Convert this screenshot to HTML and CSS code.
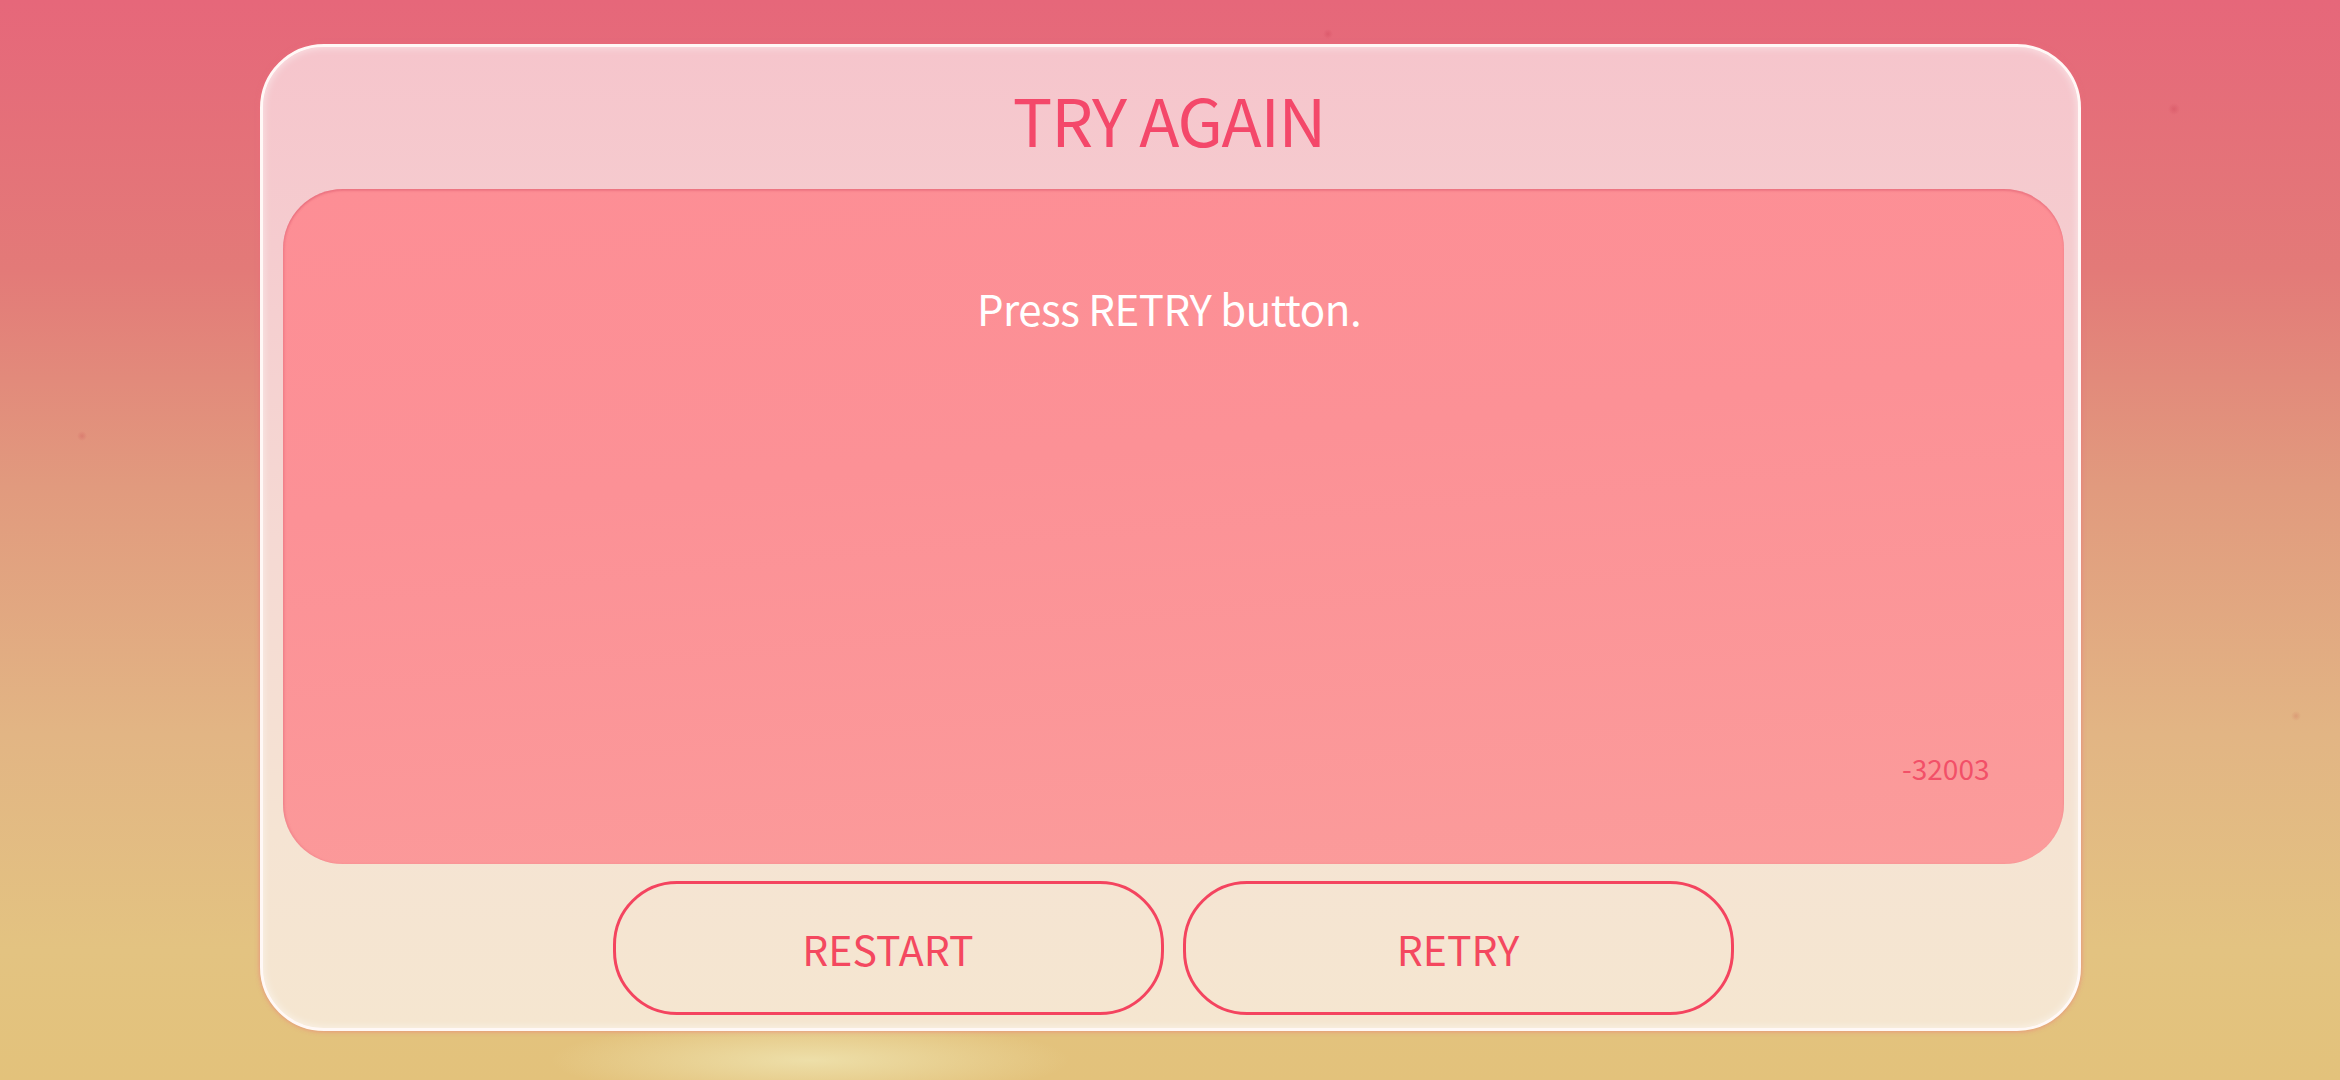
FILE: index.html
```html
<!DOCTYPE html>
<html lang="en">
<head>
<meta charset="utf-8">
<title>TRY AGAIN</title>
<link rel="stylesheet" href="styles.css">
</head>
<body>
<div class="stage">
  <section class="dialog">
    <h1 class="dialog-title">TRY AGAIN</h1>
    <div class="message-panel">
      <p class="message-text">Press RETRY button.</p>
      <span class="error-code">-32003</span>
    </div>
    <div class="actions">
      <button class="action-btn" type="button">RESTART</button>
      <button class="action-btn" type="button">RETRY</button>
    </div>
  </section>
</div>
</body>
</html>
```

FILE: styles.css
```css
html, body {
  margin: 0;
  padding: 0;
  width: 2340px;
  height: 1080px;
  overflow: hidden;
}

body {
  font-family: "Noto Sans CJK JP", "Noto Sans", sans-serif;
  background:
    radial-gradient(circle 5px at 1328px 34px, rgba(200, 60, 80, 0.3), rgba(200, 60, 80, 0) 100%),
    radial-gradient(circle 6px at 2174px 109px, rgba(200, 60, 80, 0.3), rgba(200, 60, 80, 0) 100%),
    radial-gradient(circle 5px at 82px 436px, rgba(200, 70, 80, 0.28), rgba(200, 70, 80, 0) 100%),
    radial-gradient(circle 5px at 2296px 716px, rgba(200, 90, 80, 0.25), rgba(200, 90, 80, 0) 100%),
    radial-gradient(ellipse 260px 40px at 810px 1060px, rgba(240, 230, 180, 0.8), rgba(240, 230, 180, 0) 100%),
    linear-gradient(180deg, #e6677a 0%, #e37a78 25%, #e19a7e 45%, #e2b584 68%, #e3c381 88%, #e3c27b 100%);
}

.stage {
  display: flex;
  justify-content: center;
  padding-top: 44px;
}

.dialog {
  box-sizing: border-box;
  width: 1821px;
  height: 987px;
  border: 3px solid #fff8f6;
  border-radius: 64px;
  background: linear-gradient(180deg, #f6c5cc 0%, #f5cccf 20%, #f5d9d3 50%, #f5e4d3 80%, #f5e6d0 100%);
  box-shadow: 0 0 5px rgba(236, 110, 125, 0.7), inset 0 0 8px rgba(255, 255, 255, 0.6);
  padding: 0 14px 0 20px;
  display: flex;
  flex-direction: column;
}

.dialog-title {
  margin: 0;
  height: 142px;
  display: flex;
  align-items: center;
  justify-content: center;
  font-size: 66px;
  font-weight: 400;
  color: #f4486a;
  letter-spacing: -1.2px;
  padding-right: 8px;
}

.message-panel {
  position: relative;
  height: 675px;
  border-radius: 60px;
  background: linear-gradient(175deg, #fd8e95 0%, #fc9196 40%, #fb9c9b 100%);
  box-shadow: inset 0 2px 2px rgba(220, 90, 110, 0.45), inset 2px 0 2px rgba(220, 90, 110, 0.2);
  display: flex;
  flex-direction: column;
  align-items: center;
}

.message-text {
  margin: 98px 0 0 0;
  font-size: 42px;
  color: #ffffff;
  line-height: 1;
  letter-spacing: -0.5px;
  padding-right: 8px;
}

.error-code {
  position: absolute;
  right: 74px;
  top: 565px;
  font-size: 28px;
  color: #f25068;
  line-height: 1;
}

.actions {
  display: flex;
  justify-content: center;
  gap: 19px;
  margin-top: 17px;
}

.action-btn {
  box-sizing: border-box;
  width: 551px;
  height: 134px;
  border: 3px solid #f4445f;
  border-radius: 64px;
  background: transparent;
  font-family: "Noto Sans CJK JP", "Noto Sans", sans-serif;
  font-size: 41px;
  color: #f4485f;
  padding: 0;
  cursor: pointer;
}
```
